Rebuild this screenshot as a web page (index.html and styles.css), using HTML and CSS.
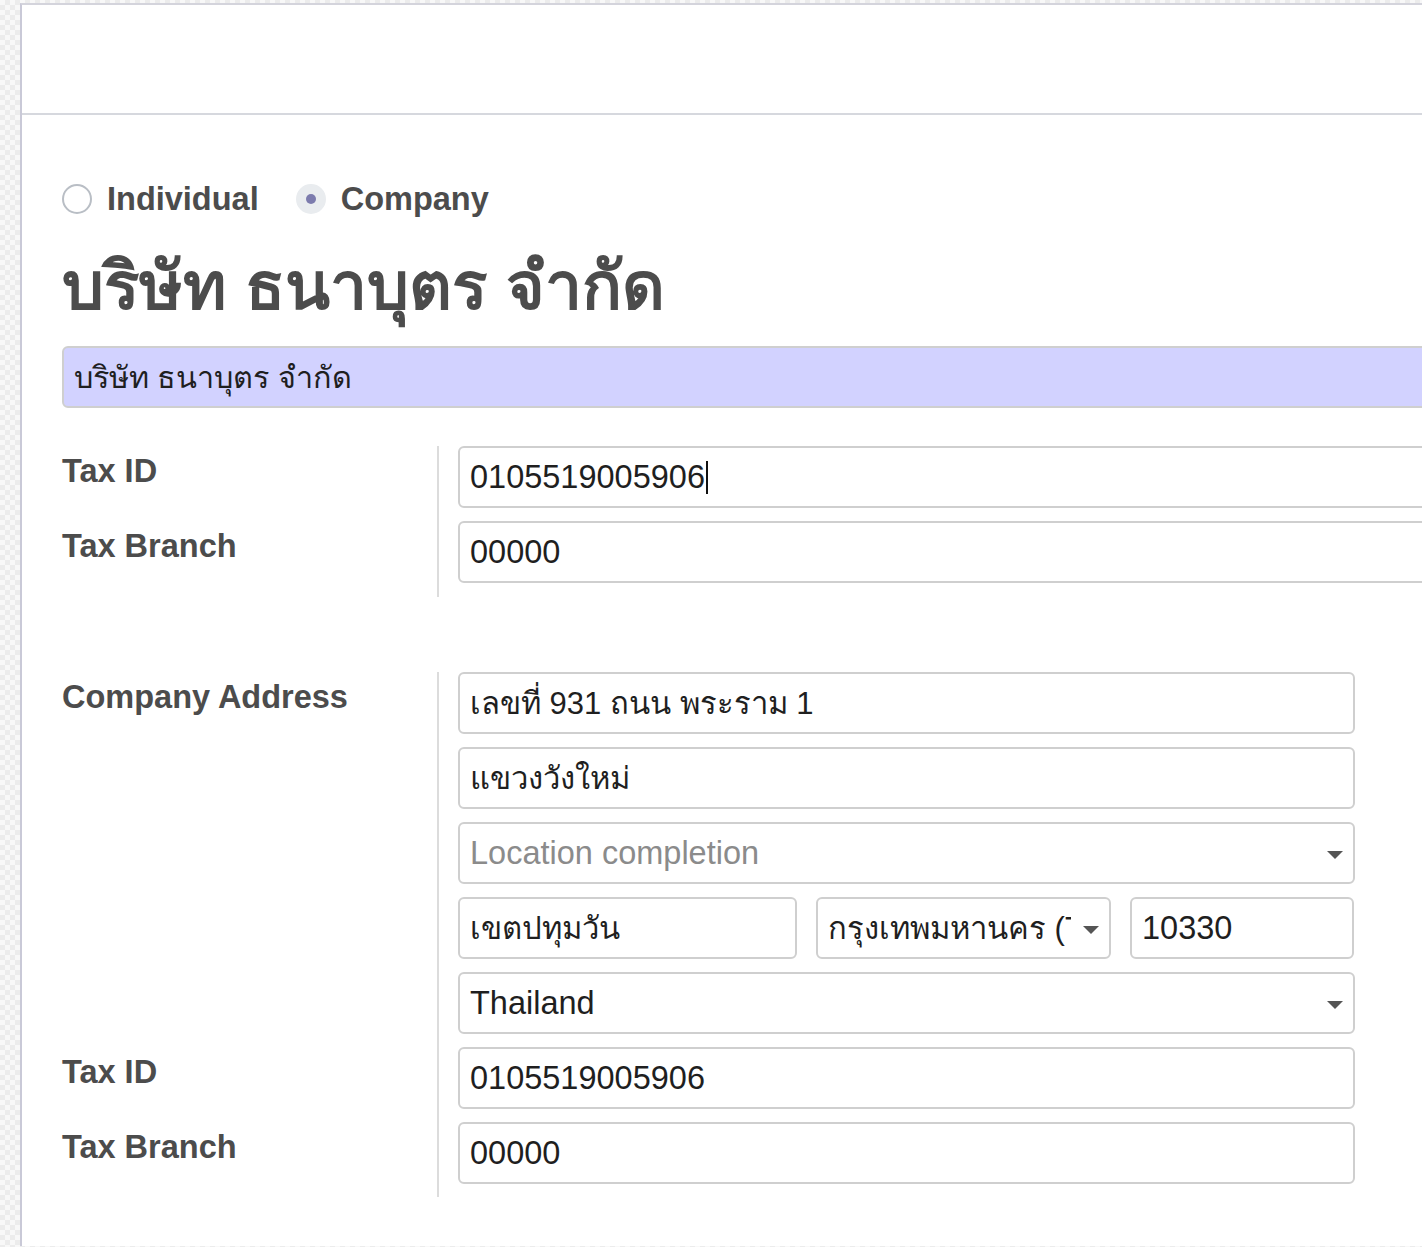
FILE: index.html
```html
<!DOCTYPE html>
<html>
<head>
<meta charset="utf-8">
<link rel="stylesheet" href="styles.css">
</head>
<body>
<div class="page">
  <div class="sheet">
    <div class="header"></div>
    <div class="content">
      <div class="radios">
        <label class="radio"><span class="circle"></span><span class="rlabel">Individual</span></label>
        <label class="radio"><span class="circle checked"><span class="dot"></span></span><span class="rlabel">Company</span></label>
      </div>
      <h1 class="title">บริษัท ธนาบุตร จำกัด</h1>
      <div class="field name-field"><span class="val">บริษัท ธนาบุตร จำกัด</span></div>

      <div class="group group-wide">
        <div class="label">Tax ID</div>
        <div class="cell"><div class="field"><span class="val">0105519005906</span><span class="cursor"></span></div></div>
        <div class="label">Tax Branch</div>
        <div class="cell"><div class="field"><span class="val">00000</span></div></div>
        <div class="label"></div>
        <div class="cell cell-end"></div>
      </div>

      <div class="group group-addr">
        <div class="label addr-label">Company Address</div>
        <div class="cell"><div class="field"><span class="val th">เลขที่ 931 ถนน พระราม 1</span></div></div>
        <div class="cell"><div class="field"><span class="val th">แขวงวังใหม่</span></div></div>
        <div class="cell"><div class="field select"><span class="val placeholder">Location completion</span><span class="caret"></span></div></div>
        <div class="cell">
          <div class="row3">
            <div class="field f-city"><span class="val th">เขตปทุมวัน</span></div>
            <div class="field select f-state"><span class="val th clip">กรุงเทพมหานคร (TH)</span><span class="caret"></span></div>
            <div class="field f-zip"><span class="val">10330</span></div>
          </div>
        </div>
        <div class="cell"><div class="field select"><span class="val">Thailand</span><span class="caret"></span></div></div>
        <div class="label">Tax ID</div>
        <div class="cell"><div class="field"><span class="val">0105519005906</span></div></div>
        <div class="label">Tax Branch</div>
        <div class="cell"><div class="field"><span class="val">00000</span></div></div>
      </div>
    </div>
  </div>
</div>
</body>
</html>
```

FILE: styles.css
```css
html, body {
  margin: 0;
  padding: 0;
}
body {
  width: 1422px;
  height: 1247px;
  overflow: hidden;
  font-family: "Liberation Sans", Arial, "DejaVu Sans", sans-serif;
  background-color: #f4f4f4;
  background-image: repeating-conic-gradient(#ececec 0% 25%, #f8f8f8 0% 50%);
  background-size: 10px 10px;
}
.page {
  padding: 3px 0 0 20px;
  height: 1244px;
  box-sizing: border-box;
}
.sheet {
  background: #fff;
  border-left: 2px solid #c9c9d7;
  border-top: 2px solid #d4d4dc;
  height: 100%;
  overflow: hidden;
}
.header {
  height: 108px;
  border-bottom: 2px solid #d6d8de;
}
.content {
  padding: 66px 0 0 40px;
}
.radios {
  display: flex;
  align-items: center;
  gap: 37px;
  height: 36px;
}
.radio {
  display: flex;
  align-items: center;
  gap: 15px;
}
.circle {
  width: 26px;
  height: 26px;
  border: 2px solid #b9bec5;
  border-radius: 50%;
  display: flex;
  align-items: center;
  justify-content: center;
  background: #fff;
}
.circle.checked {
  border-color: #e9ecef;
  background: #e9ecef;
}
.dot {
  width: 10px;
  height: 10px;
  border-radius: 50%;
  background: #7c7bad;
}
.rlabel {
  font-size: 32.5px;
  font-weight: bold;
  color: #4c4c4c;
}
.title {
  margin: 26px 0 17px 0;
  font-size: 66px;
  line-height: 86px;
  font-weight: bold;
  color: #4c4c4c;
}
.field {
  height: 62px;
  box-sizing: border-box;
  border: 2px solid #cfcfcf;
  border-radius: 6px;
  background: #fff;
  display: flex;
  align-items: center;
  padding: 0 12px 0 10px;
  font-size: 32.5px;
  color: #1f1f1f;
  position: relative;
  overflow: hidden;
  white-space: nowrap;
}
.val.th {
  font-size: 31px;
}
.name-field {
  width: 1500px;
  background: #d2d2ff;
  font-size: 30.6px;
}
.val.placeholder {
  color: #8b8b8b;
}
.cursor {
  display: inline-block;
  width: 2px;
  height: 33px;
  background: #111;
  margin-left: 1px;
}
.group {
  display: grid;
  grid-template-columns: 375px 1fr;
}
.group-wide {
  margin-top: 38px;
  width: 1600px;
}
.group-addr {
  margin-top: 75px;
  width: 1315px;
  grid-template-columns: 375px 918px;
}
.label {
  font-size: 32.5px;
  font-weight: bold;
  color: #4c4c4c;
  line-height: 48px;
  margin-top: 1px;
}
.addr-label {
  grid-row: span 5;
}
.cell {
  grid-column: 2;
  border-left: 2px solid #dcdcdc;
  padding: 0 0 13px 19px;
}
.cell-end {
  padding-bottom: 1px;
}
.select {
  padding-right: 40px;
}
.caret {
  position: absolute;
  right: 10px;
  top: 27px;
  width: 0;
  height: 0;
  border-left: 8px solid transparent;
  border-right: 8px solid transparent;
  border-top: 8px solid #555;
}
.row3 {
  display: flex;
  gap: 19px;
}
.f-city {
  width: 339px;
}
.f-state {
  width: 295px;
  padding-right: 38px;
}
.clip {
  overflow: hidden;
  display: block;
  width: 100%;
}
.f-zip {
  width: 224px;
}
```
